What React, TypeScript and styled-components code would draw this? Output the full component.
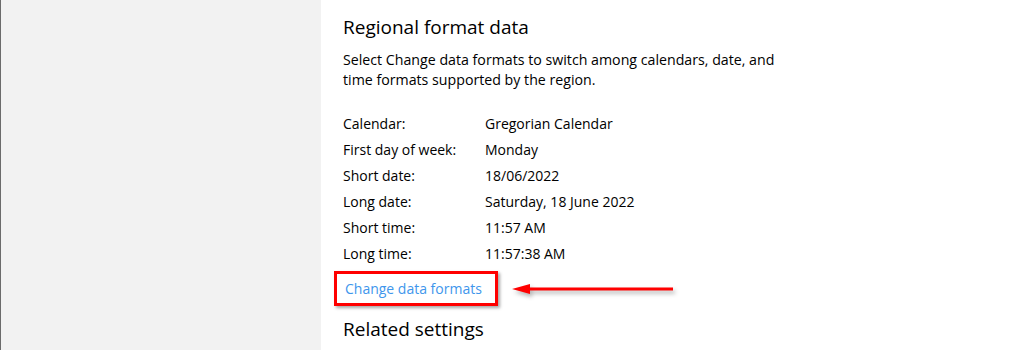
import styled, { createGlobalStyle } from 'styled-components';

const GlobalStyle = createGlobalStyle`
  html, body {
    margin: 0;
    padding: 0;
    background: #ffffff;
  }
  body {
    font-family: "Open Sans", "Noto Sans", sans-serif;
    color: #000000;
  }
`;

interface FormatRow {
  label: string;
  value: string;
}

const rows: FormatRow[] = [
  { label: 'Calendar:', value: 'Gregorian Calendar' },
  { label: 'First day of week:', value: 'Monday' },
  { label: 'Short date:', value: '18/06/2022' },
  { label: 'Long date:', value: 'Saturday, 18 June 2022' },
  { label: 'Short time:', value: '11:57 AM' },
  { label: 'Long time:', value: '11:57:38 AM' },
];

const Window = styled.div`
  display: grid;
  grid-template-columns: 321px 1fr;
  width: 1024px;
  height: 350px;
  overflow: hidden;
`;

const Sidebar = styled.div`
  background: #f2f2f2;
  border-left: 1px solid #6b6b6b;
`;

const Content = styled.div`
  padding: 14px 0 0 22px;
`;

const Heading = styled.h2`
  margin: 0;
  font-size: 19px;
  font-weight: 400;
  line-height: 26px;
`;

const Description = styled.p`
  margin: 10px 0 0;
  width: 450px;
  font-size: 14.2px;
  line-height: 20px;
`;

const Table = styled.div`
  display: grid;
  grid-template-columns: 142px auto;
  grid-auto-rows: 26px;
  align-items: center;
  margin-top: 20px;
  font-size: 14px;
`;

const Cell = styled.span`
  white-space: nowrap;
`;

const LinkRow = styled.div`
  display: flex;
  align-items: center;
  margin: 5px 0 0 -9px;
`;

const HighlightBox = styled.div`
  display: flex;
  align-items: center;
  width: 150px;
  height: 29px;
  padding-left: 8px;
  border: 3px solid #ff0000;
  box-shadow: 2px 2px 3px rgba(0, 0, 0, 0.35);
`;

const FormatLink = styled.a`
  color: #4096ec;
  font-size: 14px;
  text-decoration: none;
  white-space: nowrap;
`;

const Arrow = styled.svg`
  margin-left: 14px;
  filter: drop-shadow(2px 3px 2px rgba(0, 0, 0, 0.3));
`;

const SubHeading = styled.h3`
  margin: 10px 0 0;
  font-size: 19px;
  font-weight: 400;
  line-height: 26px;
`;

const App = () => {
  return (
    <>
      <GlobalStyle />
      <Window>
        <Sidebar />
        <Content>
          <Heading>Regional format data</Heading>
          <Description>
            Select Change data formats to switch among calendars, date, and time formats supported by the region.
          </Description>
          <Table>
            {rows.map((row) => (
              <>
                <Cell key={row.label}>{row.label}</Cell>
                <Cell key={row.value}>{row.value}</Cell>
              </>
            ))}
          </Table>
          <LinkRow>
            <HighlightBox>
              <FormatLink href="#">Change data formats</FormatLink>
            </HighlightBox>
            <Arrow width="164" height="14" viewBox="0 0 164 14">
              <polygon points="0,7 18,2 18,12" fill="#ff0000" />
              <rect x="16" y="5.5" width="145" height="3" fill="#ff0000" />
            </Arrow>
          </LinkRow>
          <SubHeading>Related settings</SubHeading>
        </Content>
      </Window>
    </>
  );
};

export default App;
